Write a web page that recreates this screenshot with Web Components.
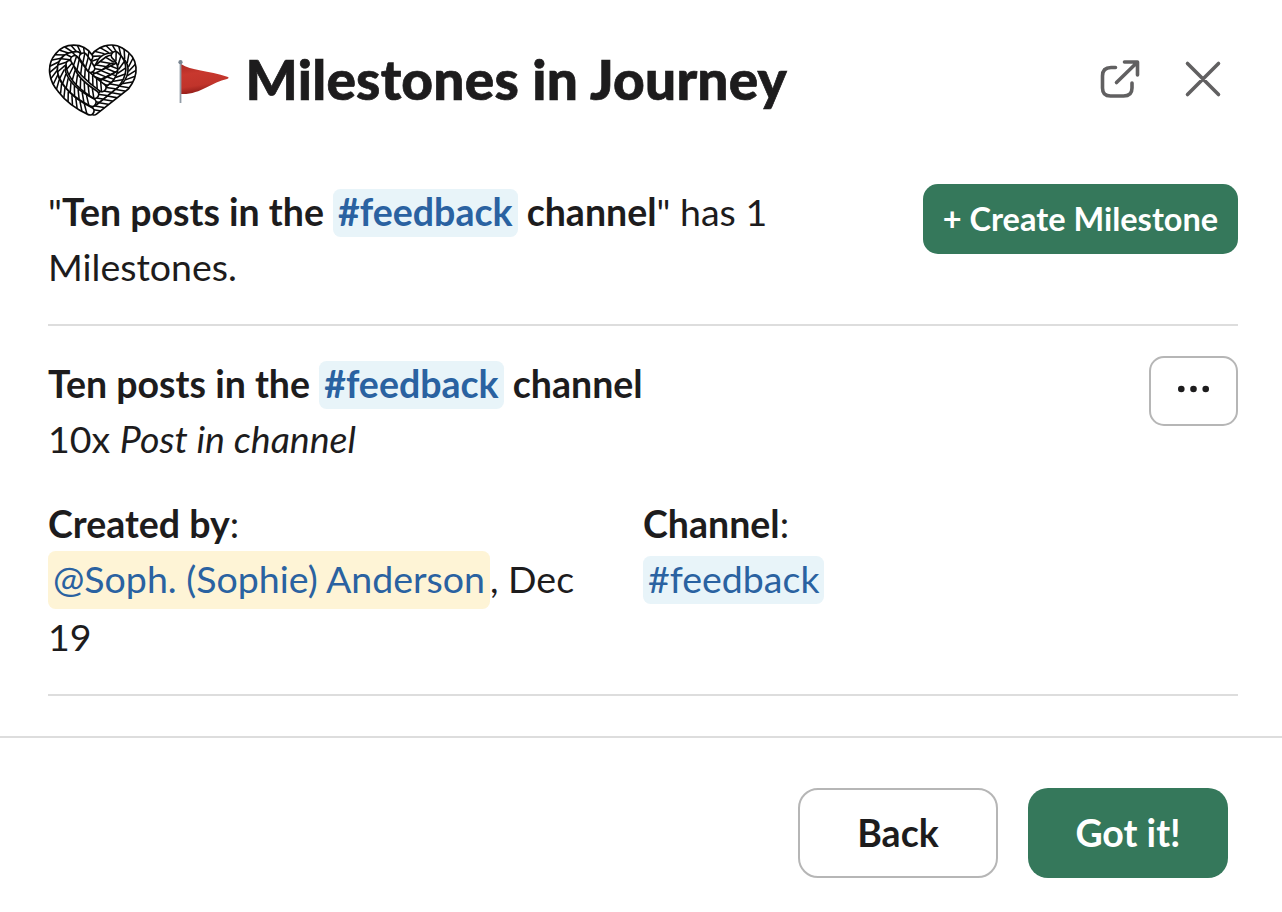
<!DOCTYPE html>
<html lang="en">
<head>
<meta charset="utf-8">
<title>Milestones in Journey</title>
<style>
body{margin:0;background:#fff;color:#1d1c1d;font-family:Lato,"Liberation Sans",sans-serif;font-size:37.5px;line-height:55px}
</style>
</head>
<body>
<milestone-modal></milestone-modal>
<script>
function define(name, html, setup) {
  const template = document.createElement('template');
  template.innerHTML = html;
  customElements.define(name, class extends HTMLElement {
    constructor() {
      super();
      this.attachShadow({ mode: 'open' }).append(template.content.cloneNode(true));
      if (setup) setup(this.shadowRoot);
    }
  });
}

// Each strand is a white cord with a dark outline and slanted dark grooves.
const strands = [
  'M168 104 L204 76 Q220 68 230 80',
  'M166 128 L232 96',
  'M186 148 L240 118',
  'M158 80 C172 42 216 34 242 50 C286 74 284 120 256 154 L162 228',
  'M226 62 C256 88 248 120 226 148 L162 200',
  'M146 66 C124 34 78 36 56 64 C30 94 40 136 64 162 Q94 202 150 228',
  'M110 62 C78 62 58 84 66 116 Q84 166 156 202',
  'M90 88 Q92 132 164 178',
  'M104 74 Q124 112 186 158',
  'M130 66 Q142 82 152 100'
];
define('rope-heart', `<style>:host{display:block;width:90px;height:90px}svg{display:block;width:100%;height:100%}</style>
<svg viewBox="24 0 270 270" fill="none" stroke-linecap="round"></svg>`, root => {
  const svg = root.querySelector('svg');
  const add = (d, color, width) => {
    const p = document.createElementNS('http://www.w3.org/2000/svg', 'path');
    p.setAttribute('d', d);
    p.setAttribute('stroke', color);
    p.setAttribute('stroke-width', width);
    svg.append(p);
    return p;
  };
  for (const d of strands) {
    const cord = add(d, '#080808', 29);
    add(d, '#fff', 19);
    const length = cord.getTotalLength();
    let grooves = '';
    for (let s = 3; s < length; s += 16) {
      const p = cord.getPointAtLength(s), q = cord.getPointAtLength(s + 1);
      const gap = Math.hypot(q.x - p.x, q.y - p.y) || 1;
      const tx = (q.x - p.x) / gap, ty = (q.y - p.y) / gap;
      const x = -ty * 10 + tx * 9, y = tx * 10 + ty * 9;
      grooves += `M${p.x - x} ${p.y - y}L${p.x + x} ${p.y + y}`;
    }
    add(grooves, '#080808', 4.6);
  }
});

define('red-flag', `<style>:host{display:block;width:55px;height:55px}svg{display:block}</style>
<svg width="55" height="55" viewBox="0 0 55 55"><defs><linearGradient id="g" x1="0" y1="0" x2=".25" y2="1"><stop stop-color="#ad2922"/><stop offset=".35" stop-color="#c8382e"/><stop offset=".75" stop-color="#c1342b"/><stop offset="1" stop-color="#8f1c18"/></linearGradient></defs>
<path d="M5 9C15 16 32 15 52 22Q53.500 23 51 24C36 27 24 40 5 39Z" fill="url(#g)"/><path d="M4.500 8V48" stroke="#929da7" stroke-width="1.8"/><circle cx="4.500" cy="7.200" r="2.100" fill="#788591"/></svg>`);

define('modal-icons', `<style>:host{display:block;width:130px;height:48px}svg{display:block}</style>
<svg width="130" height="48" viewBox="1096 55 130 48" fill="none" stroke="#616061" stroke-width="3.600" stroke-linecap="round" stroke-linejoin="round"><path d="M1115.500 67.500H1111Q1102.500 67.500 1102.500 76V88Q1102.500 96 1110.500 96H1123.500Q1132 96 1132 88V83M1124.500 62H1137.500V75M1116.500 82.500L1137 62.500M1187.500 63.500L1218.500 94.500M1218.500 63.500L1187.500 94.500"/></svg>`);

define('channel-tag', `<style>:host{background:#e8f4f9;color:#2a62a1;border-radius:7.500px;padding:0 5px 2.500px}</style><slot></slot>`);
define('user-tag', `<style>:host{display:inline-block;background:#fef4d6;color:#2a62a1;border-radius:7.500px;padding:0 5px 2.500px}</style><slot></slot>`);

define('slack-button', `<style>
:host{display:block;flex:none}
button{display:flex;align-items:center;justify-content:center;box-sizing:border-box;width:100%;height:70px;border:0;border-radius:15px;background:#35785b;color:#fff;font:700 32.5px/45px Lato,sans-serif;padding:0 0 2px;white-space:nowrap}
:host([large]) button{height:90px;border-radius:20px;font-size:37.5px}
:host([outline]) button{background:#fff;color:#1d1c1d;border:2px solid #b6b6b6}
</style><button><slot></slot></button>`);

define('content-row', `<style>:host{display:flex;align-items:flex-start;justify-content:space-between}.text{width:750px}</style><div class="text"><slot></slot></div><slot name="action"></slot>`);
define('rule-line', `<style>:host{display:block;height:2px;background:#dddddd}</style>`);

define('milestone-modal', `<style>
:host{display:flex;flex-direction:column;height:912px}
header{display:flex;align-items:flex-start;height:149px;padding:35px 56px 0 48px;box-sizing:border-box}
red-flag{margin:20px 14px 0 38px}
h1{margin:10px auto 0 .5px;font-size:55px;line-height:68px;font-weight:900;letter-spacing:.22px;-webkit-text-stroke:.7px #1d1c1d;white-space:nowrap}
modal-icons{margin-top:20px}
main{flex:1;padding:35px 44px 0 48px}
.create{width:315px}.more{width:89px}
.first{height:140px}.second{padding-top:30px}
.fields{display:grid;grid-template-columns:1fr 1fr;margin:30px 0}
.fields>div{padding-right:45px}
b{font-weight:700}
footer{display:flex;justify-content:flex-end;gap:30px;box-sizing:border-box;height:176px;padding:50px 54px 0;border-top:2px solid #ddd}
footer slack-button{width:200px}
.more svg{margin-top:-2px}
</style>
<header><rope-heart></rope-heart><red-flag></red-flag><h1>Milestones in Journey</h1><modal-icons></modal-icons></header>
<main>
<content-row class="first">"<b>Ten posts in the <channel-tag>#feedback</channel-tag> channel</b>" has 1 Milestones.<slack-button class="create" slot="action">+ Create Milestone</slack-button></content-row>
<rule-line></rule-line>
<content-row class="second"><b>Ten posts in the <channel-tag>#feedback</channel-tag> channel</b><br>10x <i>Post in channel</i><slack-button outline class="more" slot="action"><svg width="36" height="8" viewBox="0 0 36 8" fill="#1d1c1d"><circle cx="5.300" cy="4" r="3.300"/><circle cx="17.500" cy="4" r="3.300"/><circle cx="29.700" cy="4" r="3.300"/></svg></slack-button></content-row>
<div class="fields"><div><b>Created by</b>:<br><user-tag>@Soph. (Sophie) Anderson</user-tag>, Dec 19</div><div><b>Channel</b>:<br><channel-tag>#feedback</channel-tag></div></div>
<rule-line></rule-line>
</main>
<footer><slack-button large outline>Back</slack-button><slack-button large>Got it!</slack-button></footer>`);
</script>
</body>
</html>
